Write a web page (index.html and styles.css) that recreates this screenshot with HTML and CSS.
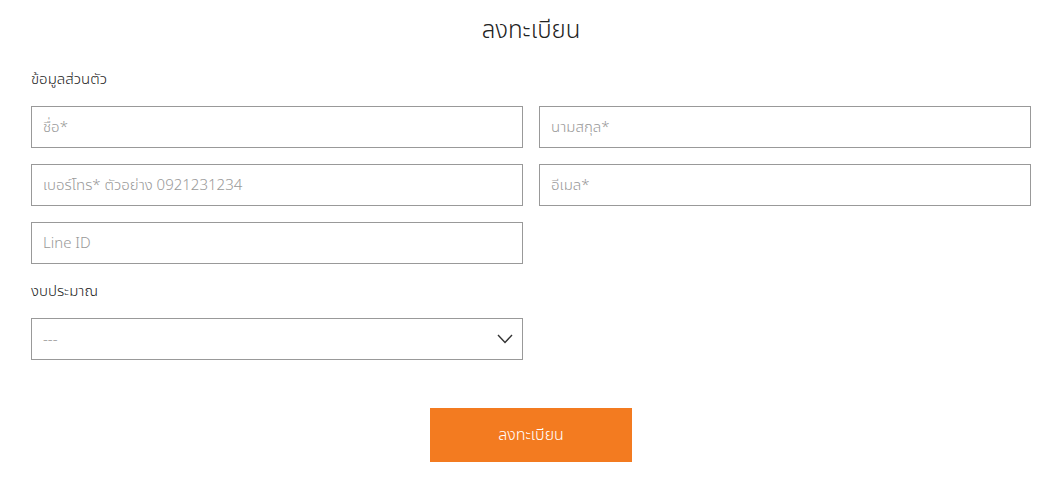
FILE: index.html
```html
<!DOCTYPE html>
<html>
<head>
    <title>ลงทะเบียน</title>
    <meta charset="utf-8">
    <link rel="stylesheet" href="styles.css">
</head>
<body>
    <div class="register-container">
        <h1 class="register-title">ลงทะเบียน</h1>
        <form id="registerForm">
            <div class="section-label">ข้อมูลส่วนตัว</div>
            <div class="field-grid">
                <input type="text" name="firstName" placeholder="ชื่อ*">
                <input type="text" name="lastName" placeholder="นามสกุล*">
                <input type="tel" name="phone" placeholder="เบอร์โทร* ตัวอย่าง 0921231234">
                <input type="email" name="email" placeholder="อีเมล*">
                <input type="text" name="lineId" placeholder="Line ID">
            </div>
            <div class="section-label budget-label">งบประมาณ</div>
            <div class="field-grid">
                <div class="select-wrap">
                    <select name="budget">
                        <option value="">---</option>
                    </select>
                    <svg class="select-arrow" width="16" height="10" viewBox="0 0 16 10">
                        <polyline points="1,1 8,8.5 15,1" fill="none" stroke="#333" stroke-width="1.4"/>
                    </svg>
                </div>
            </div>
            <div class="submit-row">
                <button type="submit">ลงทะเบียน</button>
            </div>
        </form>
    </div>
</body>
</html>
```

FILE: styles.css
```css
body {
    font-family: "Noto Sans Thai", "Noto Sans", "DejaVu Sans", sans-serif;
    font-weight: 300;
    margin: 0;
    color: #222;
    background: #fff;
}
.register-container {
    width: 1000px;
    margin: 0 auto;
}
.register-title {
    margin: 0;
    padding-top: 15px;
    font-size: 24px;
    font-weight: 300;
    line-height: 32px;
    text-align: center;
}
.section-label {
    margin-top: 23px;
    margin-bottom: 16px;
    font-size: 15px;
    line-height: 20px;
}
.budget-label {
    margin-top: 18px;
}
.field-grid {
    display: grid;
    grid-template-columns: 1fr 1fr;
    gap: 16px;
}
input, select {
    box-sizing: border-box;
    width: 100%;
    height: 42px;
    padding: 0 11px;
    border: 1px solid #999;
    border-radius: 0;
    background: #fff;
    font-family: inherit;
    font-weight: 300;
    font-size: 15px;
    color: #333;
    outline: none;
}
input::placeholder {
    color: #999;
}
.select-wrap {
    position: relative;
}
select {
    appearance: none;
    color: #999;
}
.select-arrow {
    position: absolute;
    right: 10px;
    top: 16px;
    pointer-events: none;
}
.submit-row {
    display: flex;
    justify-content: center;
    margin-top: 48px;
}
button {
    width: 202px;
    height: 54px;
    border: none;
    background: #f37b20;
    color: #fff;
    font-family: inherit;
    font-weight: 300;
    font-size: 16px;
    cursor: pointer;
}
```
